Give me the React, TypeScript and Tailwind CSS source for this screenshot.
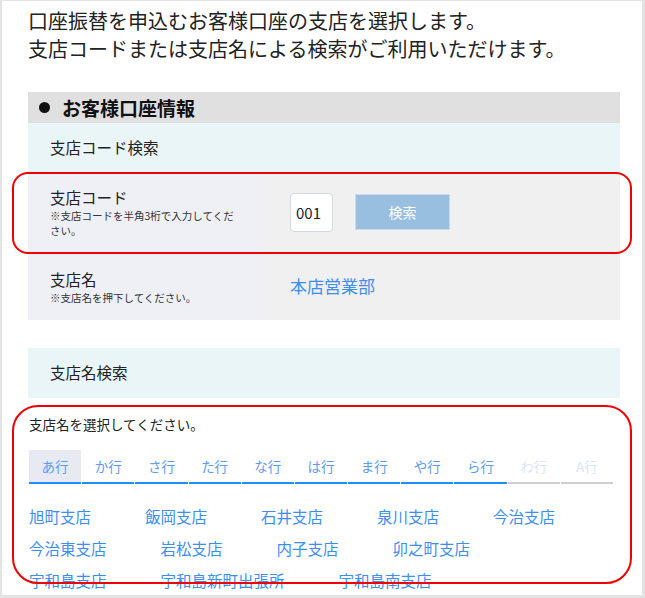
const KANA = ['あ行', 'か行', 'さ行', 'た行', 'な行', 'は行', 'ま行', 'や行', 'ら行', 'わ行', 'A行'];
const DISABLED = ['わ行', 'A行'];

const BRANCHES = [
  '旭町支店',
  '飯岡支店',
  '石井支店',
  '泉川支店',
  '今治支店',
  '今治東支店',
  '岩松支店',
  '内子支店',
  '卯之町支店',
  '宇和島支店',
  '宇和島新町出張所',
  '宇和島南支店',
];

export default function App() {
  return (
    <div className="w-[645px] h-[598px] overflow-hidden bg-[#e3e3e3] pl-[2px] pt-[1px] pr-[3px] pb-[3px] font-['Noto_Sans_CJK_JP','Noto_Sans',sans-serif]">
      <div className="relative h-full overflow-hidden bg-white pl-[26px] pr-[22px]">
        {/* intro */}
        <div className="pt-[6px] text-[20px] leading-[28px] text-[#222]">
          <p>口座振替を申込むお客様口座の支店を選択します。</p>
          <p>支店コードまたは支店名による検索がご利用いただけます。</p>
        </div>

        {/* section header */}
        <div className="mt-[29px] flex h-[31px] items-center gap-[12px] bg-[#e0e0e0] pl-[11px]">
          <span className="h-[11px] w-[11px] rounded-full bg-[#111]" />
          <h2 className="text-[19px] font-bold leading-none text-[#111]">お客様口座情報</h2>
        </div>

        <div className="flex h-[49px] items-center bg-[#e9f5f6] pl-[22px] text-[15.5px] text-[#222]">
          支店コード検索
        </div>

        {/* branch code row */}
        <div className="flex h-[80px]">
          <div className="flex w-[235px] flex-col justify-center bg-[#eef0f5] pl-[22px] pr-[23px] text-[#222]">
            <div className="text-[15.5px] leading-[22px]">支店コード</div>
            <div className="text-[10.5px] leading-[15px] text-[#333]">※支店コードを半角3桁で入力してください。</div>
          </div>
          <div className="flex flex-1 items-center gap-[22px] bg-[#f0f0f0] pl-[27px]">
            <input
              readOnly
              value="001"
              className="h-[39px] w-[43px] rounded-[4px] border border-[#d3d9e0] bg-white pl-[5px] text-[15px] text-[#222] outline-none"
            />
            <button className="h-[36px] w-[95px] border border-[#c9dcee] bg-[#98bee0] text-[14px] text-white">
              検索
            </button>
          </div>
        </div>

        {/* branch name row */}
        <div className="flex h-[68px]">
          <div className="flex w-[235px] flex-col justify-center bg-[#eef0f5] pl-[22px] text-[#222]">
            <div className="text-[15.5px] leading-[22px]">支店名</div>
            <div className="text-[10.5px] leading-[15px] text-[#333]">※支店名を押下してください。</div>
          </div>
          <div className="flex flex-1 items-center bg-[#f0f0f0] pl-[27px]">
            <a className="text-[17px] text-[#3d8ef2]">本店営業部</a>
          </div>
        </div>

        <div className="mt-[28px] flex h-[50px] items-center bg-[#e9f5f6] pl-[22px] text-[15.5px] text-[#222]">
          支店名検索
        </div>

        {/* name search */}
        <div className="pl-[1px]">
          <p className="mt-[16px] text-[13.5px] leading-[20px] text-[#222]">支店名を選択してください。</p>

          <div className="mt-[16px] grid w-[584px] grid-cols-11 gap-x-[1px]">
            {KANA.map((k, i) => {
              const off = DISABLED.includes(k);
              return (
                <div
                  key={k}
                  className={`flex h-[34px] items-center justify-center border-b-2 text-[13.5px] ${
                    off
                      ? 'border-[#cfcfcf] text-[#dae6f8]'
                      : i === 0
                        ? 'border-[#1e8cff] bg-[#e7eaf3] text-[#5b9bf3]'
                        : 'border-[#1e8cff] text-[#5b9bf3]'
                  }`}
                >
                  {k}
                </div>
              );
            })}
          </div>

          <div className="mt-[16px] flex w-[584px] flex-wrap">
            {BRANCHES.map((b) => (
              <a key={b} className="mr-[54px] text-[15.5px] leading-[32px] text-[#3d8ef2]">
                {b}
              </a>
            ))}
          </div>
        </div>

        {/* annotation frames */}
        <div className="pointer-events-none absolute left-[10px] top-[171px] h-[82px] w-[620px] rounded-[16px] border-2 border-[#f00000]" />
        <div className="pointer-events-none absolute left-[10px] top-[404px] h-[179px] w-[620px] rounded-[26px] border-2 border-[#f00000]" />
      </div>
    </div>
  );
}
